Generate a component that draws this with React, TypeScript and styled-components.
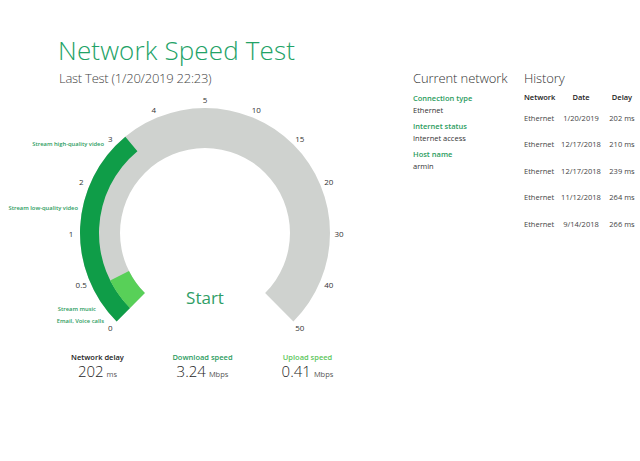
import React from 'react';
import styled, { createGlobalStyle } from 'styled-components';

const GlobalStyle = createGlobalStyle`
  html, body {
    margin: 0;
    padding: 0;
    background: #ffffff;
  }
  body {
    font-family: "Open Sans", "Noto Sans", sans-serif;
    color: #333333;
  }
`;

const GREEN = '#22a266';
const LABEL_GREEN = '#2b9c5e';
const DARK_BAND = '#0f9d48';
const LIGHT_BAND = '#58d058';
const GREY_BAND = '#cfd2cf';

// gauge geometry (svg coords)
const CX = 205;
const CY = 138;
const R_OUT = 125;
const R_MID = 106;
const R_IN = 85;
const START = 135;
const STEP = 22.5;
const TICKS = [0, 0.5, 1, 2, 3, 4, 5, 10, 15, 20, 30, 40, 50];

const polar = (r: number, deg: number): [number, number] => {
  const rad = (deg * Math.PI) / 180;
  return [CX + r * Math.cos(rad), CY + r * Math.sin(rad)];
};

const sector = (r0: number, r1: number, a0: number, a1: number) => {
  const [x0, y0] = polar(r1, a0);
  const [x1, y1] = polar(r1, a1);
  const [x2, y2] = polar(r0, a1);
  const [x3, y3] = polar(r0, a0);
  const large = a1 - a0 > 180 ? 1 : 0;
  return `M${x0} ${y0} A${r1} ${r1} 0 ${large} 1 ${x1} ${y1} L${x2} ${y2} A${r0} ${r0} 0 ${large} 0 ${x3} ${y3} Z`;
};

const valueToAngle = (v: number) => {
  for (let i = 0; i < TICKS.length - 1; i++) {
    if (v <= TICKS[i + 1]) {
      const idx = i + (v - TICKS[i]) / (TICKS[i + 1] - TICKS[i]);
      return START + idx * STEP;
    }
  }
  return START + (TICKS.length - 1) * STEP;
};

const Page = styled.div`
  display: flex;
  width: 640px;
  height: 461px;
  overflow: hidden;
`;

const LeftPane = styled.section`
  width: 345px;
  padding-top: 34px;
  display: flex;
  flex-direction: column;
`;

const Title = styled.h1`
  margin: 0 0 0 58px;
  font-size: 26px;
  line-height: 32px;
  font-weight: 300;
  color: ${GREEN};
  white-space: nowrap;
  letter-spacing: 0.15px;
`;

const Subtitle = styled.div`
  margin: 4px 0 0 59px;
  font-size: 13px;
  line-height: 16px;
  font-weight: 300;
  color: #444444;
  letter-spacing: -0.25px;
`;

const GaugeWrap = styled.div`
  position: relative;
  margin-top: 9px;
  width: 345px;
  height: 245px;
`;

const TickLabel = styled.text`
  font-family: "Open Sans", sans-serif;
  font-size: 8px;
  fill: #333333;
`;

const Caption = styled.text`
  font-family: "Open Sans", sans-serif;
  font-size: 5.8px;
  font-weight: 600;
  fill: ${LABEL_GREEN};
`;

const StartButton = styled.button`
  position: absolute;
  left: 205px;
  top: 193px;
  transform: translateX(-50%);
  border: 0;
  background: none;
  padding: 0;
  font-family: "Open Sans", sans-serif;
  font-size: 17px;
  line-height: 20px;
  color: #2f9e66;
  cursor: pointer;
`;

const StatsRow = styled.div`
  display: grid;
  grid-template-columns: repeat(3, 105px);
  margin: 12px 0 0 45px;
`;

const Stat = styled.div`
  display: flex;
  flex-direction: column;
  align-items: center;
`;

const StatLabel = styled.div<{ $color: string }>`
  font-size: 7.5px;
  line-height: 10px;
  font-weight: 600;
  color: ${(p) => p.$color};
`;

const StatValue = styled.div`
  font-size: 15px;
  line-height: 18px;
  font-weight: 300;
  color: #1e1e1e;
  white-space: nowrap;
`;

const Unit = styled.span`
  margin-left: 3px;
  font-size: 7.5px;
  font-weight: 400;
  color: #555555;
`;

const RightPane = styled.section`
  display: flex;
  margin-left: 68px;
  padding-top: 69.5px;
`;

const Heading = styled.h2`
  margin: 0;
  font-size: 13px;
  line-height: 16px;
  font-weight: 300;
  color: #333333;
  white-space: nowrap;
  letter-spacing: -0.1px;
`;

const NetworkCol = styled.div`
  width: 111px;
`;

const InfoList = styled.div`
  margin-top: 6px;
  display: flex;
  flex-direction: column;
  gap: 4px;
`;

const InfoItem = styled.div`
  display: flex;
  flex-direction: column;
`;

const InfoLabel = styled.div`
  font-size: 7.5px;
  line-height: 12px;
  font-weight: 600;
  color: ${LABEL_GREEN};
`;

const InfoValue = styled.div`
  font-size: 7.5px;
  line-height: 12px;
  color: #333333;
`;

const HistoryCol = styled.div`
  width: 120px;
`;

const Table = styled.div`
  margin-top: 3.5px;
  display: grid;
  grid-template-columns: 35px 44px 38px;
  grid-template-rows: 15.5px;
  grid-auto-rows: 26.5px;
  font-size: 7.5px;
`;

const Cell = styled.div<{ $head?: boolean; $align?: string }>`
  display: flex;
  align-items: center;
  justify-content: ${(p) => p.$align || 'flex-start'};
  white-space: nowrap;
  font-weight: ${(p) => (p.$head ? 600 : 400)};
  color: ${(p) => (p.$head ? '#222222' : '#444444')};
`;

const captions = [
  { text: 'Stream high-quality video', x: 104, y: 51 },
  { text: 'Stream low-quality video', x: 78, y: 114.5 },
  { text: 'Stream music', x: 96, y: 215.5 },
  { text: 'Email, Voice calls', x: 104, y: 227.5 },
];

const history = [
  ['Ethernet', '1/20/2019', '202 ms'],
  ['Ethernet', '12/17/2018', '210 ms'],
  ['Ethernet', '12/17/2018', '239 ms'],
  ['Ethernet', '11/12/2018', '264 ms'],
  ['Ethernet', '9/14/2018', '266 ms'],
];

const Gauge = ({ download, upload }: { download: number; upload: number }) => {
  const end = START + (TICKS.length - 1) * STEP;
  return (
    <GaugeWrap>
      <svg width="345" height="245" viewBox="0 0 345 245">
        <path d={sector(R_IN, R_OUT, START, end)} fill={GREY_BAND} />
        <path d={sector(R_MID, R_OUT, START, valueToAngle(download))} fill={DARK_BAND} />
        <path d={sector(R_IN, R_MID, START, valueToAngle(upload))} fill={LIGHT_BAND} />
        {TICKS.map((t, i) => {
          const [x, y] = polar(134, START + i * STEP);
          return (
            <TickLabel key={t} x={x} y={y} textAnchor="middle" dominantBaseline="central">
              {t}
            </TickLabel>
          );
        })}
        {captions.map((c) => (
          <Caption key={c.text} x={c.x} y={c.y} textAnchor="end">
            {c.text}
          </Caption>
        ))}
      </svg>
      <StartButton>Start</StartButton>
    </GaugeWrap>
  );
};

export default function App() {
  return (
    <Page>
      <GlobalStyle />
      <LeftPane>
        <Title>Network Speed Test</Title>
        <Subtitle>Last Test (1/20/2019 22:23)</Subtitle>
        <Gauge download={3.24} upload={0.41} />
        <StatsRow>
          <Stat>
            <StatLabel $color="#222222">Network delay</StatLabel>
            <StatValue>
              202<Unit>ms</Unit>
            </StatValue>
          </Stat>
          <Stat>
            <StatLabel $color={LABEL_GREEN}>Download speed</StatLabel>
            <StatValue>
              3.24<Unit>Mbps</Unit>
            </StatValue>
          </Stat>
          <Stat>
            <StatLabel $color="#5cc65c">Upload speed</StatLabel>
            <StatValue>
              0.41<Unit>Mbps</Unit>
            </StatValue>
          </Stat>
        </StatsRow>
      </LeftPane>
      <RightPane>
        <NetworkCol>
          <Heading>Current network</Heading>
          <InfoList>
            <InfoItem>
              <InfoLabel>Connection type</InfoLabel>
              <InfoValue>Ethernet</InfoValue>
            </InfoItem>
            <InfoItem>
              <InfoLabel>Internet status</InfoLabel>
              <InfoValue>Internet access</InfoValue>
            </InfoItem>
            <InfoItem>
              <InfoLabel>Host name</InfoLabel>
              <InfoValue>armin</InfoValue>
            </InfoItem>
          </InfoList>
        </NetworkCol>
        <HistoryCol>
          <Heading>History</Heading>
          <Table>
            <Cell $head>Network</Cell>
            <Cell $head $align="center">Date</Cell>
            <Cell $head $align="center">Delay</Cell>
            {history.map((row, i) => (
              <React.Fragment key={i}>
                <Cell>{row[0]}</Cell>
                <Cell $align="center">{row[1]}</Cell>
                <Cell $align="center">{row[2]}</Cell>
              </React.Fragment>
            ))}
          </Table>
        </HistoryCol>
      </RightPane>
    </Page>
  );
}
